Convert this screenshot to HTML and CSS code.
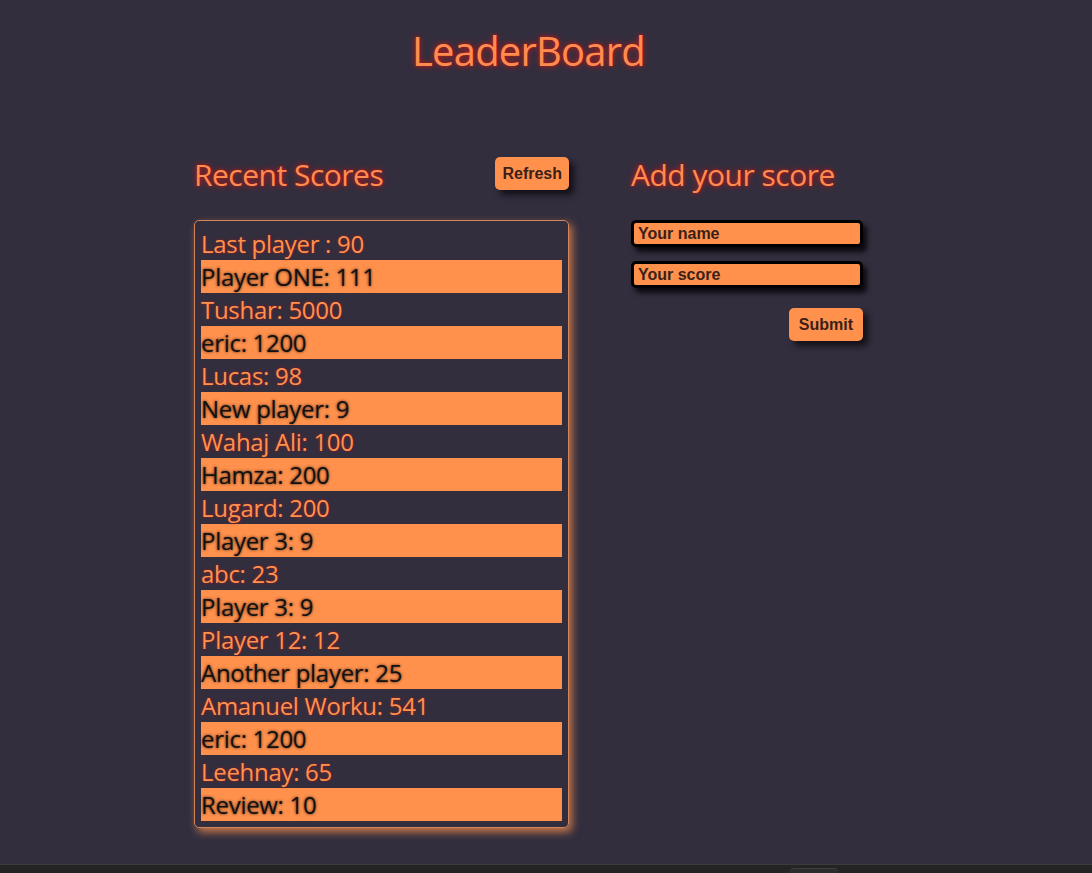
FILE: index.html
```html
<!DOCTYPE html>
<html>
<head>
<meta charset="utf-8">
<link rel="stylesheet" href="styles.css">
</head>
<body>
<div class="page">
  <header class="top">
    <h1 class="title">LeaderBoard</h1>
  </header>
  <main class="main">
    <section class="scores">
      <div class="scores-head">
        <h2 class="heading">Recent Scores</h2>
        <button class="btn">Refresh</button>
      </div>
      <ul class="list">
        <li>Last player : 90</li>
        <li>Player ONE: 111</li>
        <li>Tushar: 5000</li>
        <li>eric: 1200</li>
        <li>Lucas: 98</li>
        <li>New player: 9</li>
        <li>Wahaj Ali: 100</li>
        <li>Hamza: 200</li>
        <li>Lugard: 200</li>
        <li>Player 3: 9</li>
        <li>abc: 23</li>
        <li>Player 3: 9</li>
        <li>Player 12: 12</li>
        <li>Another player: 25</li>
        <li>Amanuel Worku: 541</li>
        <li>eric: 1200</li>
        <li>Leehnay: 65</li>
        <li>Review: 10</li>
      </ul>
    </section>
    <section class="add">
      <h2 class="heading">Add your score</h2>
      <form class="form">
        <input class="field" type="text" placeholder="Your name">
        <input class="field" type="text" placeholder="Your score">
        <button class="btn submit" type="button">Submit</button>
      </form>
    </section>
  </main>
</div>
<div class="bottombar"><span class="tab"></span></div>
</body>
</html>
```

FILE: styles.css
```css
html, body {
  margin: 0;
  padding: 0;
  background: #322e3e;
  height: 100%;
  overflow: hidden;
}
body {
  font-family: "Open Sans", "Noto Sans", sans-serif;
  display: flex;
  flex-direction: column;
}
.page {
  width: 1057px;
  flex: 1;
}
.top {
  display: flex;
  justify-content: center;
  padding-top: 22px;
}
.title {
  margin: 0;
  font-size: 40px;
  font-weight: 400;
  line-height: 57px;
  letter-spacing: -0.8px;
  color: #ff8c4e;
  text-shadow: 0 0 6px #c01c1c, 0 0 3px #a01818;
}
.main {
  display: flex;
  justify-content: center;
  gap: 62px;
  margin-top: 77px;
}
.scores {
  width: 375px;
}
.scores-head {
  display: flex;
  justify-content: space-between;
  align-items: flex-start;
  height: 64px;
}
.heading {
  margin: 0;
  font-size: 30px;
  font-weight: 400;
  line-height: 41px;
  color: #ff8c4e;
  text-shadow: 0 0 6px #c01c1c, 0 0 3px #a01818;
  letter-spacing: -0.5px;
}
.scores .heading {
  margin-top: -2px;
}
.btn {
  font-family: "Liberation Sans", Arial, sans-serif;
  font-weight: 700;
  font-size: 16px;
  color: #3b1f18;
  background: #ff914d;
  border: none;
  border-radius: 5px;
  height: 33px;
  padding: 0 7px;
  box-shadow: 5px 5px 6px #141018;
  cursor: pointer;
}
.scores .btn {
  margin-top: 1px;
}
.list {
  list-style: none;
  margin: 0;
  padding: 6px;
  border: 1px solid #d2845a;
  border-radius: 5px;
  box-shadow: 3px 4px 8px rgba(255, 145, 77, 0.75);
}
.list li {
  font-size: 24px;
  line-height: 33px;
  height: 33px;
  color: #ff914d;
  text-shadow: 0 0 3px #a01c1c;
  white-space: nowrap;
  letter-spacing: -0.3px;
}
.list li:nth-child(even) {
  background: #ff914d;
  color: #111;
  text-shadow: 0 0 3px #3b1c10;
}
.add {
  width: 232px;
}
.add .heading {
  margin-top: -2px;
}
.form {
  display: flex;
  flex-direction: column;
  align-items: flex-end;
  gap: 14px;
  margin-top: 25px;
}
.field {
  box-sizing: border-box;
  width: 232px;
  height: 27px;
  margin: 0;
  padding: 0 4px 0;
  border: 3px solid #000;
  border-radius: 5px;
  background: #ff914d;
  font-family: "Liberation Sans", Arial, sans-serif;
  font-weight: 700;
  font-size: 16px;
  color: #3b1f18;
  box-shadow: 4px 5px 5px #0c0a10;
  outline: none;
}
.field::placeholder {
  color: #3b1f18;
  opacity: 1;
}
.submit {
  margin-top: 6px;
  padding: 0 10px;
}
.bottombar {
  height: 8px;
  background: #242424;
  border-top: 1px solid #3c3c3c;
  position: relative;
}
.tab {
  position: absolute;
  left: 790px;
  top: 3px;
  width: 48px;
  height: 6px;
  border-radius: 4px 4px 0 0;
  background: #2c2c2c;
  border-top: 1px solid #3e3e3e;
}
```
